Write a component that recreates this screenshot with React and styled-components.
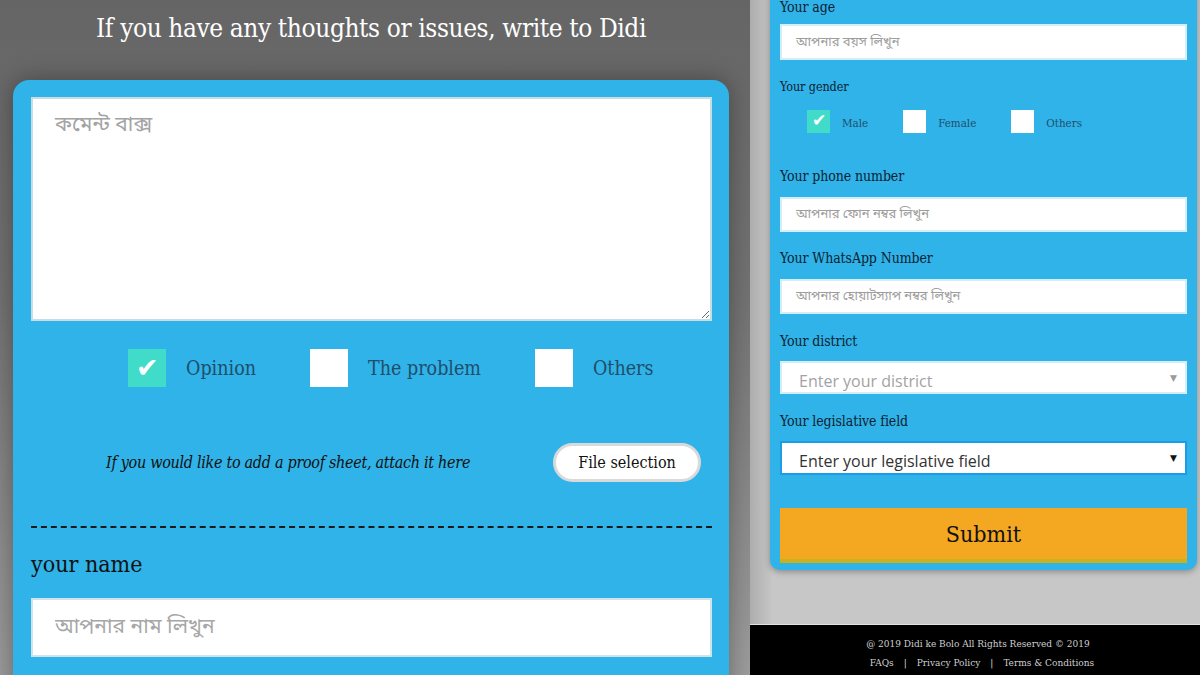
import React from 'react';
import styled, { createGlobalStyle } from 'styled-components';

const GlobalStyle = createGlobalStyle`
    html, body {
        margin: 0;
        padding: 0;
        width: 1200px;
        height: 675px;
        overflow: hidden;
    }
    * {
        box-sizing: border-box;
    }
`;

const SLAB = `"DejaVu Serif Condensed", "DejaVu Serif", serif`;
const BENGALI = `"Noto Sans Bengali", "Lohit Bengali", "Noto Sans", sans-serif`;

const Page = styled.div`
    display: grid;
    grid-template-columns: 750px 450px;
    height: 675px;
    font-family: ${SLAB};
`;

const LeftPane = styled.section`
    background: linear-gradient(180deg, #656565 0%, #737373 45%, #9c9c9c 100%);
    padding: 13px 21px 0 13px;
    overflow: hidden;
`;

const Title = styled.h1`
    margin: 0 0 37px;
    text-align: center;
    color: #fff;
    font-weight: 400;
    font-size: 26px;
    line-height: 30px;
    letter-spacing: -0.4px;
`;

const BigCard = styled.div`
    background: #30b3e8;
    border-radius: 16px 16px 0 0;
    padding: 17px 17px 40px 18px;
    box-shadow: 0 0 24px rgba(0, 0, 0, 0.35);
`;

const CommentBox = styled.textarea`
    display: block;
    width: 681px;
    height: 224px;
    border: 2px solid #c7dde4;
    background: #fff;
    padding: 13px 22px;
    font-family: ${BENGALI};
    font-size: 21px;
    resize: vertical;
    outline: none;

    &::placeholder {
        color: #a3a3a3;
    }
`;

const ChoiceRow = styled.div`
    display: flex;
    align-items: center;
    gap: ${p => p.$gap}px;
    padding-left: ${p => p.$indent}px;
    margin-top: ${p => p.$top}px;
`;

const Choice = styled.label`
    display: flex;
    align-items: center;
    gap: ${p => p.$gap}px;
    color: #1f4e6b;
    font-family: ${SLAB};
    font-weight: 300;
    font-size: ${p => p.$size}px;
    line-height: 1;
`;

const ChoiceText = styled.span`
    padding-top: ${p => p.$drop || 0}px;
`;

const Box = styled.span`
    display: flex;
    align-items: center;
    justify-content: center;
    width: ${p => p.$size}px;
    height: ${p => p.$size}px;
    background: ${p => (p.$checked ? '#40dbc9' : '#fff')};
    color: #fff;
    font-family: "DejaVu Sans", sans-serif;
    font-size: ${p => p.$size * 0.72}px;
    line-height: 1;
    flex-shrink: 0;
`;

const AttachRow = styled.div`
    display: flex;
    align-items: center;
    justify-content: space-between;
    margin-top: 56px;
    padding: 0 11px 0 75px;
`;

const AttachNote = styled.span`
    font-style: italic;
    font-size: 16px;
    color: #111;
    letter-spacing: -0.3px;
`;

const PillButton = styled.button`
    width: 148px;
    height: 39px;
    border-radius: 20px;
    border: 3px solid #d9d9d9;
    background: #fff;
    font-family: ${SLAB};
    font-size: 16px;
    color: #111;
`;

const Divider = styled.hr`
    margin: 44px 0 0;
    border: 0;
    border-top: 2px dashed #1a1a1a;
`;

const NameLabel = styled.div`
    margin-top: 22px;
    font-size: 23px;
    line-height: 28px;
    color: #111;
`;

const BigInput = styled.input`
    display: block;
    width: 681px;
    height: 59px;
    margin-top: 20px;
    border: 2px solid #cfe3ea;
    padding: 0 22px;
    font-family: ${BENGALI};
    font-size: 21px;
    outline: none;

    &::placeholder {
        color: #a7a7a7;
    }
`;

const RightPane = styled.section`
    display: flex;
    flex-direction: column;
    background: #c7c7c7;
    overflow: hidden;
`;

const RightBody = styled.div`
    flex: 1;
    padding-left: 20px;
    padding-right: 3px;
    background: linear-gradient(90deg, #adadad 0px, #c3c3c3 20px, #c7c7c7 22px);
`;

const FormCard = styled.div`
    margin-top: -13px;
    background: #30b3e8;
    border-radius: 0 0 10px 10px;
    padding: 10px 10px 7px;
    box-shadow: 0 2px 6px rgba(0, 0, 0, 0.3);
`;

const Field = styled.div`
    margin-top: ${p => p.$top}px;
`;

const FieldLabel = styled.div`
    font-size: ${p => p.$size || 14}px;
    line-height: 20px;
    color: #0e2233;
    margin-bottom: ${p => p.$gap ?? 11}px;
    letter-spacing: -0.1px;
`;

const SmallInput = styled.input`
    display: block;
    width: 100%;
    height: ${p => p.$h || 35}px;
    border: 2px solid #d4eef9;
    background: #fff;
    padding: 0 14px;
    font-family: ${BENGALI};
    font-size: 13px;
    outline: none;

    &::placeholder {
        color: #9d9d9d;
    }
`;

const SelectWrap = styled.div`
    position: relative;
    height: ${p => p.$h}px;

    &::after {
        content: '▼';
        position: absolute;
        right: 10px;
        top: 50%;
        transform: translateY(-50%);
        font-family: "DejaVu Sans", sans-serif;
        font-size: 9px;
        color: ${p => (p.$active ? '#111' : '#9a9a9a')};
        pointer-events: none;
    }
`;

const Select = styled.select`
    appearance: none;
    display: block;
    width: 100%;
    height: 100%;
    border: 2px solid ${p => (p.$active ? '#1c9ce6' : '#d4eef9')};
    border-radius: 0;
    background: #fff;
    padding: 6px 17px 0;
    font-family: "Open Sans", sans-serif;
    font-size: 16px;
    color: ${p => (p.$active ? '#333' : '#a3a3a3')};
    outline: none;
`;

const SubmitButton = styled.button`
    display: block;
    width: 100%;
    height: 55px;
    margin-top: 33px;
    border: 0;
    border-bottom: 4px solid #c9b21c;
    background: #f4a720;
    font-family: ${SLAB};
    font-size: 23px;
    color: #111;
`;

const Footer = styled.footer`
    height: 51px;
    background: #000;
    border-top: 1px solid #e2e2e2;
    color: #cfcfcf;
    font-size: 10px;
    text-align: center;
    padding: 9px 0 0 6px;
    line-height: 19px;
`;

const FooterLinks = styled.div`
    display: flex;
    justify-content: center;
    gap: 10px;
    padding-left: 8px;
`;

const Pipe = styled.span`
    color: #ddd;
`;

function CheckBox({ checked, size }) {
    return (
        <Box $checked={checked} $size={size}>
            {checked ? '✔' : ''}
        </Box>
    );
}

const topics = [
    { label: 'Opinion', checked: true },
    { label: 'The problem' },
    { label: 'Others' },
];

const genders = [
    { label: 'Male', checked: true },
    { label: 'Female' },
    { label: 'Others' },
];

function CommentForm() {
    return (
        <LeftPane>
            <Title>If you have any thoughts or issues, write to Didi</Title>
            <BigCard>
                <CommentBox placeholder="কমেন্ট বাক্স" />
                <ChoiceRow $gap={54} $indent={97} $top={28}>
                    {topics.map(t => (
                        <Choice key={t.label} $gap={20} $size={19.5}>
                            <CheckBox checked={t.checked} size={38} />
                            <ChoiceText $drop={2}>{t.label}</ChoiceText>
                        </Choice>
                    ))}
                </ChoiceRow>
                <AttachRow>
                    <AttachNote>If you would like to add a proof sheet, attach it here</AttachNote>
                    <PillButton>File selection</PillButton>
                </AttachRow>
                <Divider />
                <NameLabel>your name</NameLabel>
                <BigInput placeholder="আপনার নাম লিখুন" />
            </BigCard>
        </LeftPane>
    );
}

function DetailsForm() {
    return (
        <RightPane>
            <RightBody>
                <FormCard>
                    <Field $top={0}>
                        <FieldLabel $gap={7}>Your age</FieldLabel>
                        <SmallInput $h={36} placeholder="আপনার বয়স লিখুন" />
                    </Field>
                    <Field $top={17}>
                        <FieldLabel $size={12.5} $gap={13}>Your gender</FieldLabel>
                        <ChoiceRow $gap={35} $indent={27} $top={0}>
                            {genders.map(g => (
                                <Choice key={g.label} $gap={12} $size={11.5}>
                                    <CheckBox checked={g.checked} size={23} />
                                    <ChoiceText $drop={4}>{g.label}</ChoiceText>
                                </Choice>
                            ))}
                        </ChoiceRow>
                    </Field>
                    <Field $top={33}>
                        <FieldLabel>Your phone number</FieldLabel>
                        <SmallInput placeholder="আপনার ফোন নম্বর লিখুন" />
                    </Field>
                    <Field $top={16}>
                        <FieldLabel>Your WhatsApp Number</FieldLabel>
                        <SmallInput placeholder="আপনার হোয়াটস্যাপ নম্বর লিখুন" />
                    </Field>
                    <Field $top={17}>
                        <FieldLabel $gap={10}>Your district</FieldLabel>
                        <SelectWrap $h={33}>
                            <Select defaultValue="">
                                <option value="">Enter your district</option>
                            </Select>
                        </SelectWrap>
                    </Field>
                    <Field $top={17}>
                        <FieldLabel $gap={10}>Your legislative field</FieldLabel>
                        <SelectWrap $h={34} $active>
                            <Select $active defaultValue="">
                                <option value="">Enter your legislative field</option>
                            </Select>
                        </SelectWrap>
                    </Field>
                    <SubmitButton>Submit</SubmitButton>
                </FormCard>
            </RightBody>
            <Footer>
                <div>@ 2019 Didi ke Bolo All Rights Reserved © 2019</div>
                <FooterLinks>
                    <span>FAQs</span>
                    <Pipe>|</Pipe>
                    <span>Privacy Policy</span>
                    <Pipe>|</Pipe>
                    <span>Terms &amp; Conditions</span>
                </FooterLinks>
            </Footer>
        </RightPane>
    );
}

export default function App() {
    return (
        <>
            <GlobalStyle />
            <Page>
                <CommentForm />
                <DetailsForm />
            </Page>
        </>
    );
}
